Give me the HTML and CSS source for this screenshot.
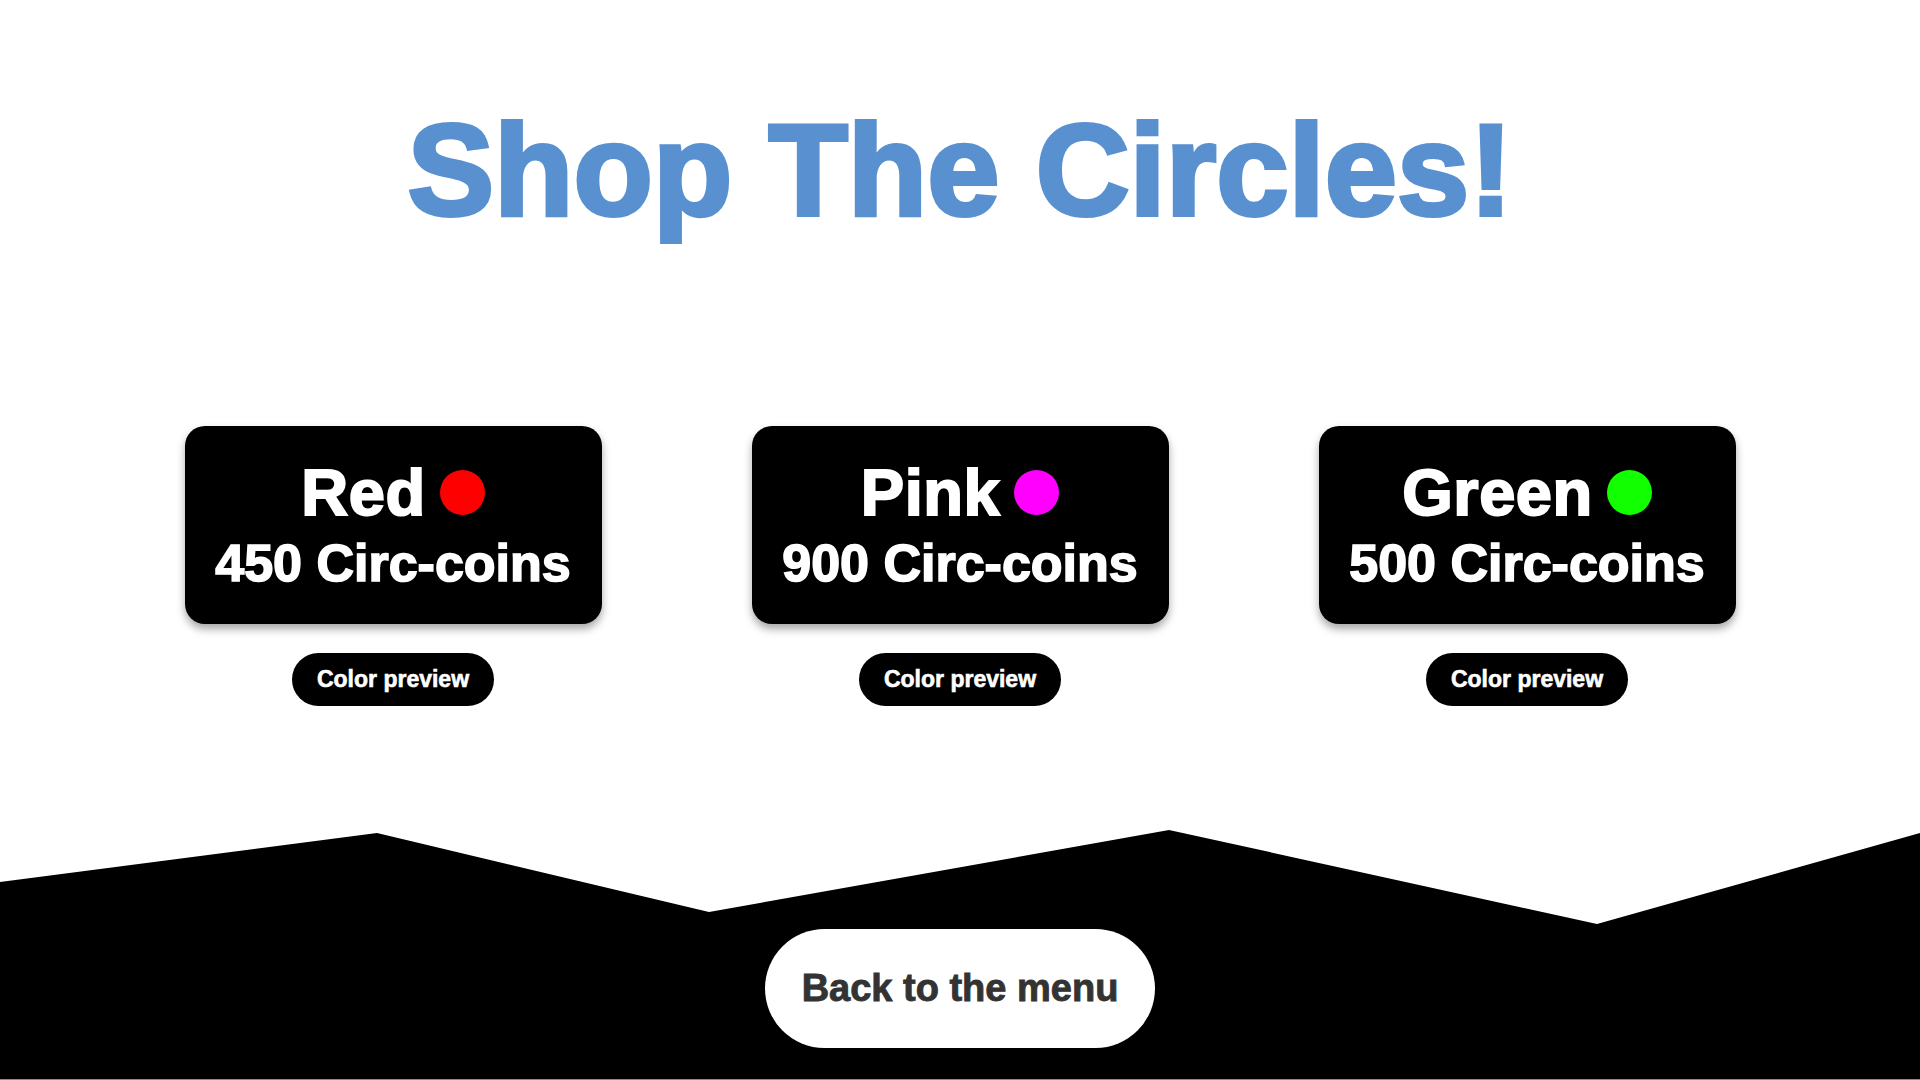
FILE: index.html
```html
<!DOCTYPE html>
<html lang="en">
<head>
<meta charset="utf-8">
<title>Shop The Circles!</title>
<link rel="stylesheet" href="styles.css">
</head>
<body>
<div class="page">
  <header class="header">
    <h1 class="title">Shop The Circles!</h1>
  </header>
  <main class="shop">
    <div class="item">
      <div class="card">
        <div class="name-row"><span class="name">Red</span><span class="dot dot-red"></span></div>
        <div class="price">450 Circ-coins</div>
      </div>
      <button class="preview">Color preview</button>
    </div>
    <div class="item">
      <div class="card">
        <div class="name-row"><span class="name">Pink</span><span class="dot dot-pink"></span></div>
        <div class="price">900 Circ-coins</div>
      </div>
      <button class="preview">Color preview</button>
    </div>
    <div class="item">
      <div class="card">
        <div class="name-row"><span class="name">Green</span><span class="dot dot-green"></span></div>
        <div class="price">500 Circ-coins</div>
      </div>
      <button class="preview">Color preview</button>
    </div>
  </main>
  <footer class="footer">
    <button class="back">Back to the menu</button>
  </footer>
</div>
</body>
</html>
```
FILE: styles.css
```css
* { box-sizing: border-box; }
html, body { margin: 0; padding: 0; background: #ffffff; }
body { font-family: "Liberation Sans", Arial, Helvetica, sans-serif; font-weight: 700; }
.page { height: 1080px; display: flex; flex-direction: column; overflow: hidden; }
.header { padding-top: 95px; display: flex; justify-content: center; }
.title {
  margin: 0; font-size: 130px; font-weight: 700; color: #5990d0; line-height: normal;
  -webkit-text-stroke: 4px #5990d0;
}
.shop { margin-top: 181px; display: flex; justify-content: center; gap: 150px; }
.item { width: 417px; display: flex; flex-direction: column; align-items: center; gap: 29px; }
.card {
  width: 417px; height: 198px; background: #000; border-radius: 20px;
  box-shadow: 0 5px 8px rgba(0,0,0,0.35);
  display: flex; flex-direction: column; align-items: center; justify-content: center;
  color: #fff;
}
.name-row { display: flex; align-items: center; gap: 14px; }
.name { font-size: 65px; line-height: 72px; -webkit-text-stroke: 2px #fff; letter-spacing: 0.5px; }
.dot { width: 45px; height: 45px; border-radius: 50%; display: block; margin-top: -2px; }
.dot-red { background: #ff0000; }
.dot-pink { background: #ff00ff; }
.dot-green { background: #11ff00; }
.price { margin-top: 4px; font-size: 52px; line-height: normal; -webkit-text-stroke: 1.6px #fff; }
.preview {
  height: 53px; padding: 0 25px; border: none; border-radius: 27px;
  background: #000; color: #fff; font-family: inherit; font-weight: 700; font-size: 23px;
  -webkit-text-stroke: 0.6px #fff;
  display: flex; align-items: center; justify-content: center;
}
.footer {
  margin-top: auto; height: 250px; background: #000;
  border-bottom: 1px solid #8c8c8c;
  clip-path: polygon(0 52px, 377px 3px, 709px 82px, 1169px 0, 1597px 94px, 1920px 3px, 1920px 250px, 0 250px);
  display: flex; justify-content: center; padding-top: 99px;
}
.back {
  width: 390px; height: 119px; border: none; border-radius: 60px; background: #fff;
  color: #333; font-family: inherit; font-weight: 700; font-size: 38px;
  -webkit-text-stroke: 0.9px #333;
  display: flex; align-items: center; justify-content: center;
}
```
